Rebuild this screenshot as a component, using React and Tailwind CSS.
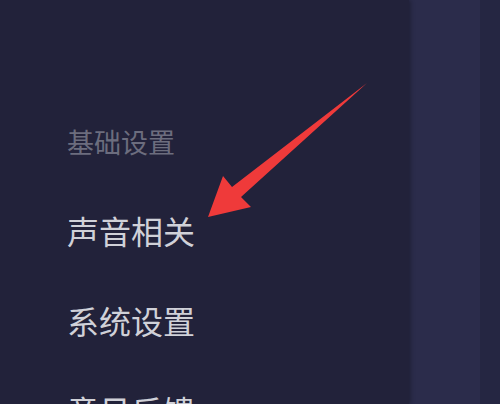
import React from "react";

const items = ["声音相关", "系统设置", "意见反馈"];

export default function App() {
  return (
    <div
      className="relative flex h-[404px] w-[500px] overflow-hidden bg-[#252642]"
      style={{ fontFamily: '"Noto Sans CJK SC", "Noto Sans", sans-serif' }}
    >
      {/* === Sidebar === */}
      <aside className="flex h-full w-[409px] shrink-0 flex-col bg-[#22223a] pl-[67px] pt-[122px] shadow-[2px_0_4px_rgba(0,0,0,0.25)] z-10">
        <div className="flex h-[40px] items-center text-[27px] text-[#6c6d7e]">基础设置</div>
        <div className="mt-[23px] flex flex-col">
          {items.map((item) => (
            <div key={item} className="flex h-[90px] shrink-0 items-center text-[32px] text-[#d0d1d8]">
              {item}
            </div>
          ))}
        </div>
      </aside>

      {/* === Middle column === */}
      <div className="h-full w-[71px] shrink-0 bg-[#2b2c4b]" />
      <div className="h-full flex-1 bg-[#252642]" />

      {/* === Annotation arrow === */}
      <svg className="pointer-events-none absolute left-0 top-0 z-20" width="500" height="404" viewBox="0 0 500 404">
        <polygon
          points="208,217 223,176 232,187 367,83 241,197 251,207"
          fill="#ef3a3a"
        />
      </svg>
    </div>
  );
}
